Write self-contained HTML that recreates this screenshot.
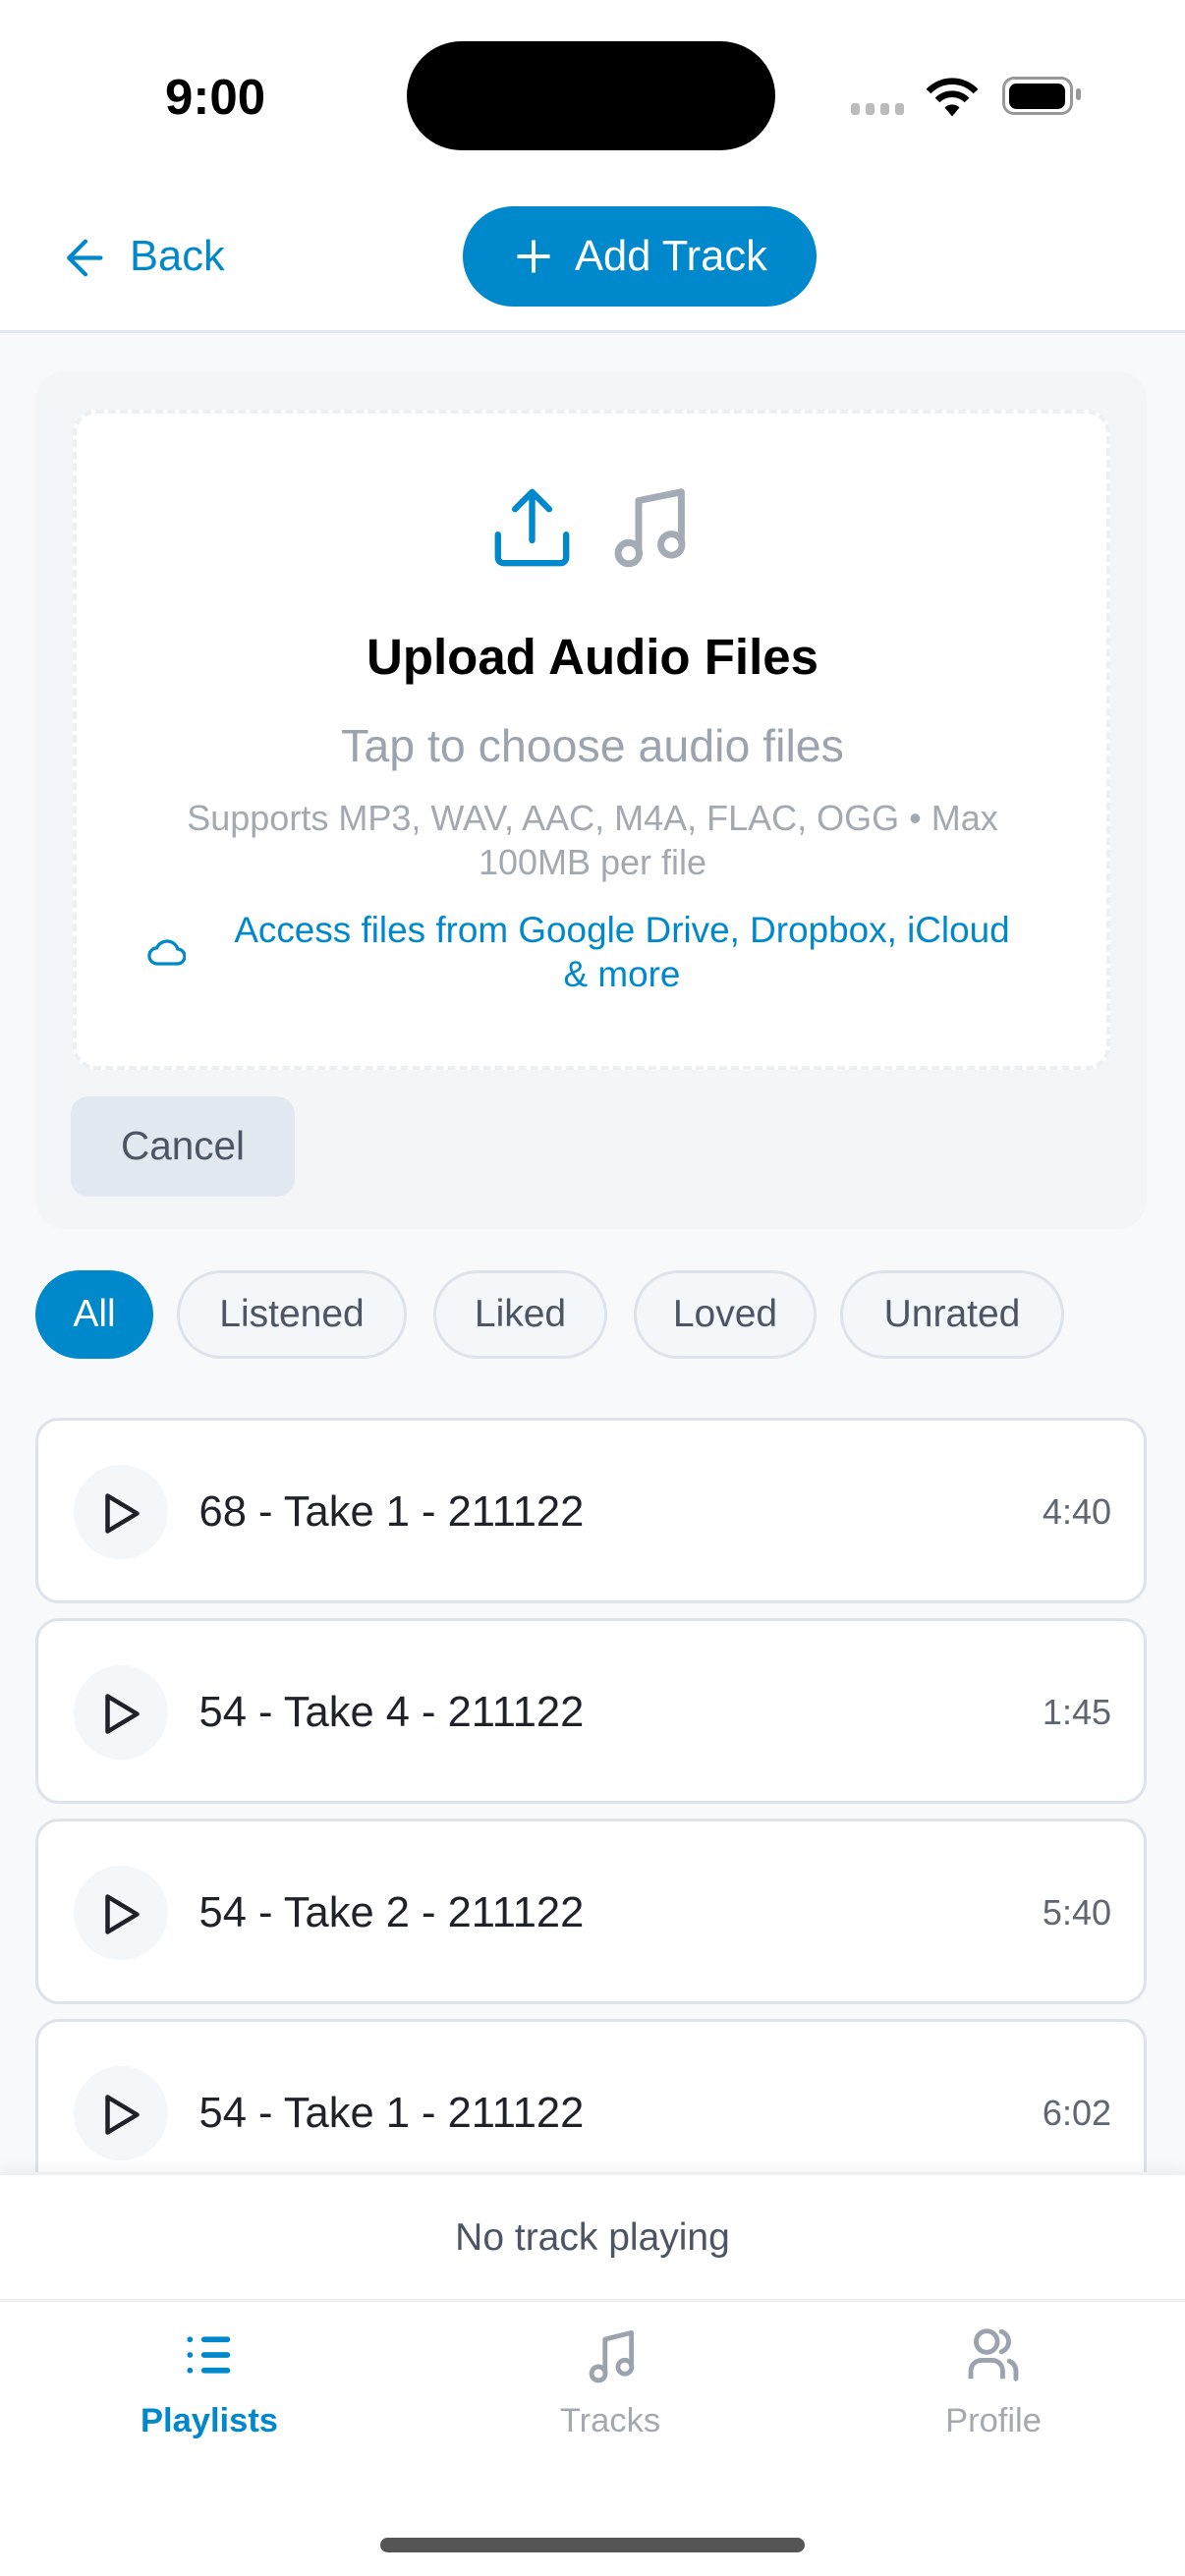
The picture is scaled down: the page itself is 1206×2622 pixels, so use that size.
<!DOCTYPE html>
<html><head><meta charset="utf-8"><style>
html,body{margin:0;padding:0;background:#fff;}
body{width:1206px;height:2622px;overflow:hidden;}
#s{zoom:3;width:402px;height:874px;position:relative;font-family:"Liberation Sans",sans-serif;background:#f7f9fb;overflow:hidden;}
.a{position:absolute;}
.c{text-align:center;}
.d{position:absolute;width:3px;height:4px;background:#bbb;border-radius:1px;top:35px;}
</style></head><body><div id="s">
<div class="a" style="left:0;top:0;width:402px;height:112px;background:#fff;border-bottom:1px solid #e2e8f0;"></div>
<div class="a" style="left:56px;top:23px;font-size:17px;font-weight:bold;color:#000;">9:00</div>
<div class="a" style="left:138px;top:14px;width:125px;height:37px;border-radius:19px;background:#000;"></div>
<div class="d" style="left:288.5px"></div><div class="d" style="left:293.5px"></div><div class="d" style="left:298.5px"></div><div class="d" style="left:303.5px"></div>
<svg class="a" style="left:314px;top:26px" width="18" height="14" viewBox="0 0 18 14"><path d="M1 5a11 11 0 0 1 16 0" stroke="#000" stroke-width="2.2" fill="none"/><path d="M4 8a7 7 0 0 1 10 0" stroke="#000" stroke-width="2.2" fill="none"/><path d="M6.5 10.5L9 13.5 11.5 10.5a3.5 3.5 0 0 0-5 0z" fill="#000"/></svg>
<div class="a" style="left:340px;top:26px;width:22px;height:11px;border:1.3px solid #999;border-radius:4px;"></div>
<div class="a" style="left:342.3px;top:28.3px;width:19px;height:8.7px;background:#000;border-radius:2.5px;"></div>
<div class="a" style="left:365px;top:30px;width:1.5px;height:4px;background:#999;border-radius:1px;"></div>

<svg class="a" style="left:22px;top:80px" width="14" height="15" viewBox="0 0 15 16"><path d="M13 8H2M7.5 2L1.5 8l6 6" stroke="#0088cc" stroke-width="1.5" fill="none" stroke-linecap="round" stroke-linejoin="round"/></svg>
<div class="a" style="left:44px;top:79px;font-size:14.5px;color:#0088cc;">Back</div>
<div class="a" style="left:157px;top:70px;width:120px;height:34px;border-radius:17px;background:#0088cc;"></div>
<svg class="a" style="left:175px;top:81px" width="12" height="12" viewBox="0 0 12 12"><path d="M6 .5v11M.5 6h11" stroke="#fff" stroke-width="1.3"/></svg>
<div class="a" style="left:195px;top:79px;font-size:14.5px;color:#fff;">Add Track</div>

<div class="a" style="left:12px;top:126px;width:377px;height:291px;background:#f3f6f9;border-radius:10px;"></div>
<div class="a" style="left:24.5px;top:139px;width:352px;height:224px;background:#fff;border:1.5px dashed #edf0f3;border-radius:8px;box-sizing:border-box;"></div>
<svg class="a" style="left:167px;top:165px" width="27" height="28" viewBox="0 0 28 29"><path d="M14 19V2M8 8l6-6 6 6" stroke="#0088cc" stroke-width="2.2" fill="none" stroke-linecap="round" stroke-linejoin="round"/><path d="M2 17v8a2 2 0 0 0 2 2h20a2 2 0 0 0 2-2v-8" stroke="#0088cc" stroke-width="2.2" fill="none" stroke-linecap="round"/></svg>
<svg class="a" style="left:207px;top:165px" width="28" height="28" viewBox="0 0 29 29"><path d="M10 23V5l15-3v18" stroke="#a3acb5" stroke-width="2.4" fill="none" stroke-linejoin="round"/><circle cx="6.5" cy="23.5" r="3.7" stroke="#a3acb5" stroke-width="2.4" fill="none"/><circle cx="21.5" cy="20.5" r="3.7" stroke="#a3acb5" stroke-width="2.4" fill="none"/></svg>
<div class="a c" style="left:0;width:402px;top:213px;font-size:17px;font-weight:bold;color:#000;">Upload Audio Files</div>
<div class="a c" style="left:0;width:402px;top:244px;font-size:15.5px;color:#9ba4ae;">Tap to choose audio files</div>
<div class="a c" style="left:40px;width:322px;top:270px;font-size:12px;line-height:15px;color:#a3a9b0;">Supports MP3, WAV, AAC, M4A, FLAC, OGG • Max<br>100MB per file</div>
<svg class="a" style="left:50px;top:318px" width="13" height="10" viewBox="0 0 13 10"><path d="M3.5 9a2.7 2.7 0 0 1-.3-5.4A3.8 3.8 0 0 1 10.3 4 2.5 2.5 0 0 1 10 9z" stroke="#0088cc" stroke-width="1.1" fill="none"/></svg>
<div class="a c" style="left:64px;width:294px;top:308px;font-size:12.3px;line-height:15px;color:#0088cc;">Access files from Google Drive, Dropbox, iCloud<br>&amp; more</div>
<div class="a" style="left:24px;top:372px;width:76px;height:34px;background:#e2e8ef;border-radius:6px;"></div>
<div class="a c" style="left:24px;width:76px;top:381px;font-size:13.5px;color:#4b5563;">Cancel</div>

<div class="a c" style="left:12px;top:431px;width:40px;height:30px;line-height:30px;border-radius:15px;background:#0088cc;color:#fff;font-size:13px;">All</div>
<div class="a c" style="left:60px;top:431px;width:78px;height:30px;line-height:28px;box-sizing:border-box;border:1px solid #dde3ea;border-radius:15px;background:#f4f7fa;color:#4b5563;font-size:13px;">Listened</div>
<div class="a c" style="left:147px;top:431px;width:59px;height:30px;line-height:28px;box-sizing:border-box;border:1px solid #dde3ea;border-radius:15px;background:#f4f7fa;color:#4b5563;font-size:13px;">Liked</div>
<div class="a c" style="left:215px;top:431px;width:62px;height:30px;line-height:28px;box-sizing:border-box;border:1px solid #dde3ea;border-radius:15px;background:#f4f7fa;color:#4b5563;font-size:13px;">Loved</div>
<div class="a c" style="left:285px;top:431px;width:76px;height:30px;line-height:28px;box-sizing:border-box;border:1px solid #dde3ea;border-radius:15px;background:#f4f7fa;color:#4b5563;font-size:13px;">Unrated</div>

<div class="a" style="left:12px;top:481px;width:377px;height:63px;box-sizing:border-box;border:1px solid #dde3ea;border-radius:8px;background:#fff;"></div>
<div class="a" style="left:12px;top:549px;width:377px;height:63px;box-sizing:border-box;border:1px solid #dde3ea;border-radius:8px;background:#fff;"></div>
<div class="a" style="left:12px;top:617px;width:377px;height:63px;box-sizing:border-box;border:1px solid #dde3ea;border-radius:8px;background:#fff;"></div>
<div class="a" style="left:12px;top:685px;width:377px;height:63px;box-sizing:border-box;border:1px solid #dde3ea;border-radius:8px;background:#fff;"></div>

<div class="a" style="left:25px;top:497px;width:32px;height:32px;border-radius:16px;background:#f4f7fa;"></div>
<div class="a" style="left:25px;top:565px;width:32px;height:32px;border-radius:16px;background:#f4f7fa;"></div>
<div class="a" style="left:25px;top:633px;width:32px;height:32px;border-radius:16px;background:#f4f7fa;"></div>
<div class="a" style="left:25px;top:701px;width:32px;height:32px;border-radius:16px;background:#f4f7fa;"></div>
<svg class="a" style="left:35px;top:506px" width="13" height="15" viewBox="0 0 13 15"><path d="M1.5 1.5v12l10-6z" stroke="#1f2329" stroke-width="1.5" fill="none" stroke-linejoin="round"/></svg>
<svg class="a" style="left:35px;top:574px" width="13" height="15" viewBox="0 0 13 15"><path d="M1.5 1.5v12l10-6z" stroke="#1f2329" stroke-width="1.5" fill="none" stroke-linejoin="round"/></svg>
<svg class="a" style="left:35px;top:642px" width="13" height="15" viewBox="0 0 13 15"><path d="M1.5 1.5v12l10-6z" stroke="#1f2329" stroke-width="1.5" fill="none" stroke-linejoin="round"/></svg>
<svg class="a" style="left:35px;top:710px" width="13" height="15" viewBox="0 0 13 15"><path d="M1.5 1.5v12l10-6z" stroke="#1f2329" stroke-width="1.5" fill="none" stroke-linejoin="round"/></svg>

<div class="a" style="left:67.5px;top:505px;font-size:14.5px;color:#1f2329;">68 - Take 1 - 211122</div>
<div class="a" style="left:67.5px;top:573px;font-size:14.5px;color:#1f2329;">54 - Take 4 - 211122</div>
<div class="a" style="left:67.5px;top:641px;font-size:14.5px;color:#1f2329;">54 - Take 2 - 211122</div>
<div class="a" style="left:67.5px;top:709px;font-size:14.5px;color:#1f2329;">54 - Take 1 - 211122</div>
<div class="a" style="right:25px;top:506px;font-size:12px;color:#5f6670;">4:40</div>
<div class="a" style="right:25px;top:574px;font-size:12px;color:#5f6670;">1:45</div>
<div class="a" style="right:25px;top:642px;font-size:12px;color:#5f6670;">5:40</div>
<div class="a" style="right:25px;top:710px;font-size:12px;color:#5f6670;">6:02</div>

<div class="a" style="left:0;top:737px;width:402px;height:137px;background:#fff;box-shadow:0 -2px 4px rgba(0,0,0,0.04);"></div>
<div class="a" style="left:0;top:737px;width:402px;height:1px;background:#eef0f2;"></div>
<div class="a c" style="left:0;width:402px;top:752px;font-size:13px;color:#4b5563;">No track playing</div>
<div class="a" style="left:0;top:780px;width:402px;height:1px;background:#eef0f2;"></div>

<svg class="a" style="left:63px;top:792px" width="16" height="14" viewBox="0 0 18 16"><g stroke="#0088cc" stroke-width="2.2" stroke-linecap="round"><path d="M7 2h9M7 8h9M7 14h9"/><path d="M1.5 2h.01M1.5 8h.01M1.5 14h.01"/></g></svg>
<div class="a c" style="left:21px;width:100px;top:815px;font-size:11.5px;font-weight:bold;color:#0088cc;">Playlists</div>
<svg class="a" style="left:199px;top:790px" width="17" height="19" viewBox="0 0 19 21"><path d="M7 17V4l10-2.5v13" stroke="#9ba4ae" stroke-width="1.8" fill="none" stroke-linejoin="round"/><circle cx="4.5" cy="17" r="2.6" stroke="#9ba4ae" stroke-width="1.8" fill="none"/><circle cx="14.5" cy="14.5" r="2.6" stroke="#9ba4ae" stroke-width="1.8" fill="none"/></svg>
<div class="a c" style="left:157px;width:100px;top:815px;font-size:11.5px;color:#a3a9b0;">Tracks</div>
<svg class="a" style="left:328px;top:789px" width="18" height="20" viewBox="0 0 20 22"><circle cx="7.5" cy="6" r="4" stroke="#9ba4ae" stroke-width="1.8" fill="none"/><path d="M1.5 20v-3a4 4 0 0 1 4-4h4a4 4 0 0 1 4 4v3" stroke="#9ba4ae" stroke-width="1.8" fill="none"/><path d="M13 2.2a4 4 0 0 1 0 7.6M16 13.3a4 4 0 0 1 2.5 3.7v3" stroke="#9ba4ae" stroke-width="1.8" fill="none" stroke-linecap="round"/></svg>
<div class="a c" style="left:287px;width:100px;top:815px;font-size:11.5px;color:#a3a9b0;">Profile</div>
<div class="a" style="left:129px;top:861px;width:144px;height:5px;border-radius:3px;background:#555;"></div>
</div></body></html>
